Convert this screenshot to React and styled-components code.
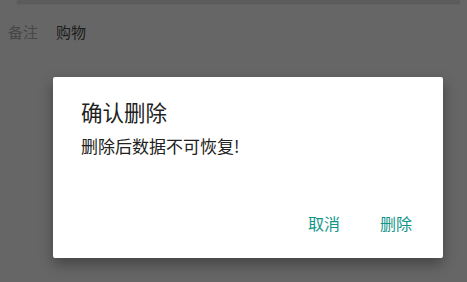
import React from "react";
import styled, { createGlobalStyle } from "styled-components";

const Global = createGlobalStyle`
  html, body { margin: 0; padding: 0; }
  body { font-family: "Noto Sans CJK SC", "Noto Sans", sans-serif; background: #666666; }
`;

const Page = styled.div`
  width: 467px;
  height: 282px;
  background: #666666;
  overflow: hidden;
  display: flex;
  flex-direction: column;
`;

const TopBand = styled.div`
  height: 3px;
  margin: 0 7px 0 17px;
  background: #5c5c5c;
  box-shadow: 0 1px 2px rgba(0, 0, 0, 0.15);
`;

const NoteRow = styled.div`
  display: flex;
  gap: 18px;
  padding: 17px 0 0 8px;
  font-size: 15px;
  line-height: 24px;
`;

const NoteLabel = styled.span`
  color: ${(p) => (p.$muted ? "#474747" : "#1c1c1c")};
`;

const Dialog = styled.div`
  margin: 33px 0 0 53px;
  width: 390px;
  height: 181px;
  box-sizing: border-box;
  background: #ffffff;
  border-radius: 2px;
  box-shadow: 0 6px 14px rgba(0, 0, 0, 0.35);
  display: flex;
  flex-direction: column;
  padding: 21px 24px 0 28px;
`;

const Title = styled.div`
  font-size: 21.5px;
  line-height: 28px;
  color: #212121;
`;

const Message = styled.div`
  margin-top: 8px;
  font-size: 17px;
  line-height: 24px;
  color: #212121;
`;

const Actions = styled.div`
  margin-top: auto;
  margin-bottom: 23px;
  display: flex;
  justify-content: flex-end;
  gap: 40px;
  padding-right: 7px;
`;

const ActionButton = styled.button`
  border: none;
  background: none;
  padding: 0;
  font-family: inherit;
  font-size: 16px;
  line-height: 24px;
  color: #12968a;
  cursor: pointer;
`;

export default function App() {
  return (
    <>
      <Global />
      <Page>
        <TopBand />
        <NoteRow>
          <NoteLabel $muted>备注</NoteLabel>
          <NoteLabel>购物</NoteLabel>
        </NoteRow>
        <Dialog>
          <Title>确认删除</Title>
          <Message>删除后数据不可恢复!</Message>
          <Actions>
            <ActionButton>取消</ActionButton>
            <ActionButton>删除</ActionButton>
          </Actions>
        </Dialog>
      </Page>
    </>
  );
}
